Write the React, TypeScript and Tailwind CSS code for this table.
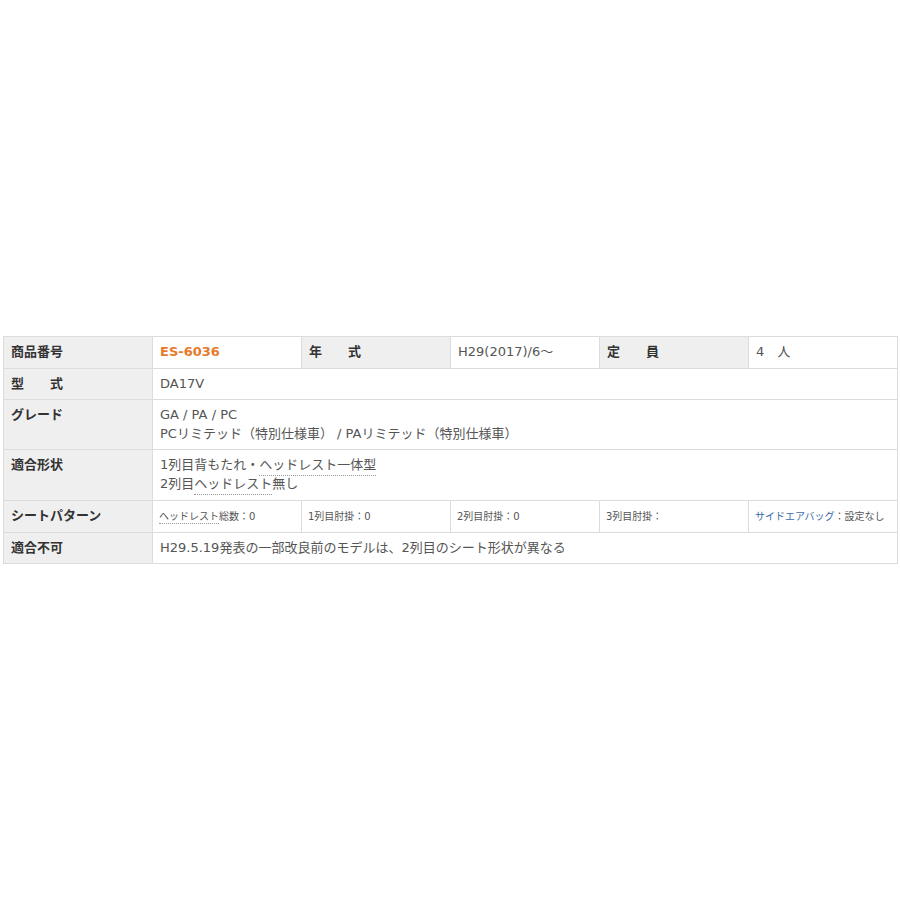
import React from "react";

const th = "bg-[#efefef] border border-[#dcdcdc] text-left align-top font-bold text-[#333] px-[7px] pt-[5px] pb-[4px] leading-[19px]";
const td = "bg-white border border-[#dcdcdc] text-left align-top text-[#555] px-[7px] pt-[5px] pb-[4px] leading-[19px]";
const sm = "bg-white border border-[#dcdcdc] text-left align-middle text-[#555] px-[6px] py-[4px] text-[10px] leading-[19px]";

const dotted = "border-b border-dotted border-[#999] pb-[3px]";
const dottedSm = "border-b border-dotted border-[#999] pb-[1px]";

export default function App() {
  return (
    <div
      className="min-h-[900px] bg-white pt-[336px] pl-[3px] text-[13px]"
      style={{ fontFamily: '"DejaVu Sans", "Noto Sans CJK JP", sans-serif' }}
    >
      <table className="w-[894px] table-fixed border-collapse">
        <colgroup>
          <col className="w-[149px]" />
          <col className="w-[149px]" />
          <col className="w-[149px]" />
          <col className="w-[149px]" />
          <col className="w-[149px]" />
          <col className="w-[149px]" />
        </colgroup>
        <tbody>
          <tr className="h-[32px]">
            <th className={th}>商品番号</th>
            <td className={td}>
              <span className="font-bold text-[#e87a2c]">ES-6036</span>
            </td>
            <th className={th}>年　　式</th>
            <td className={td}>H29(2017)/6〜</td>
            <th className={th}>定　　員</th>
            <td className={td}>4　人</td>
          </tr>
          <tr className="h-[31px]">
            <th className={th}>型　　式</th>
            <td className={td} colSpan={5}>DA17V</td>
          </tr>
          <tr className="h-[50px]">
            <th className={th}>グレード</th>
            <td className={td} colSpan={5}>
              GA / PA / PC
              <br />
              PCリミテッド（特別仕様車） / PAリミテッド（特別仕様車）
            </td>
          </tr>
          <tr className="h-[51px]">
            <th className={th}>適合形状</th>
            <td className={td} colSpan={5}>
              1列目背もたれ・<span className={dotted}>ヘッドレスト一体型</span>
              <br />
              2列目<span className={dotted}>ヘッドレスト</span>無し
            </td>
          </tr>
          <tr className="h-[32px]">
            <th className={th}>シートパターン</th>
            <td className={sm}>
              <span className={dottedSm}>ヘッドレスト</span>総数：0
            </td>
            <td className={sm}>1列目肘掛：0</td>
            <td className={sm}>2列目肘掛：0</td>
            <td className={sm}>3列目肘掛：</td>
            <td className={sm}>
              <span className="text-[#3b6aa8]">サイドエアバッグ</span>：設定なし
            </td>
          </tr>
          <tr className="h-[31px]">
            <th className={th}>適合不可</th>
            <td className={td} colSpan={5}>
              H29.5.19発表の一部改良前のモデルは、2列目のシート形状が異なる
            </td>
          </tr>
        </tbody>
      </table>
    </div>
  );
}
